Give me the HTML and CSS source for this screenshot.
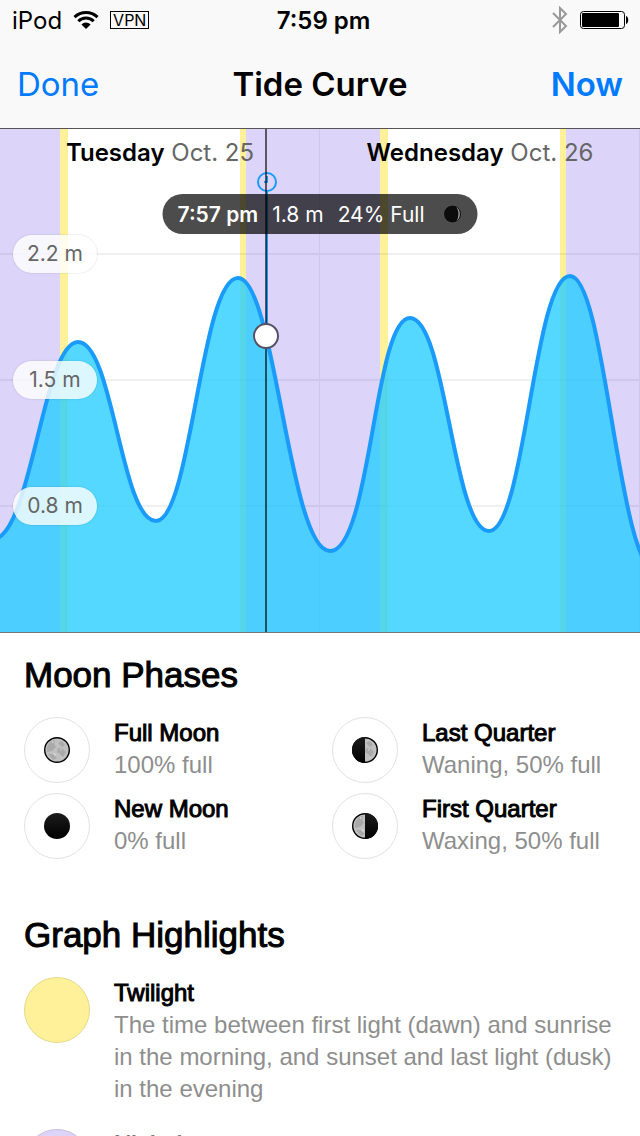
FILE: index.html
```html
<!DOCTYPE html>
<html lang="en">
<head>
    <meta charset="UTF-8">
    <meta name="viewport" content="width=device-width, initial-scale=1.0">
    <title>Tide Curve</title>
    <link rel="stylesheet" href="styles.css">
</head>
<body>
    <header class="header">
        <div class="status-bar">
            <div class="status-left">
                <span>iPod</span>
                <svg class="wifi" width="26" height="20" viewBox="0 0 26 20">
                    <path d="M1.5 7.2a16.5 16.5 0 0 1 23 0M5.3 11.2a11 11 0 0 1 15.4 0" fill="none" stroke="#000" stroke-width="3"/>
                    <path d="M13 19l-4.6-4.6a6.6 6.6 0 0 1 9.2 0z"/>
                </svg>
                <span class="vpn">VPN</span>
            </div>
            <div class="status-time">7:59 pm</div>
            <div class="status-right">
                <svg width="16" height="28" viewBox="0 0 16 28">
                    <path d="M1 7l13 13-6 6V2l6 6L1 21" fill="none" stroke="#999" stroke-width="2"/>
                </svg>
                <svg width="50" height="20" viewBox="0 0 50 20">
                    <rect x="1.5" y="1.5" width="44" height="17" rx="3" fill="none" stroke="#000"/>
                    <rect x="3" y="3" width="37" height="14" rx="1"/>
                    <path d="M47 6c3 1 3 7 0 8z"/>
                </svg>
            </div>
        </div>
        <nav class="nav-bar">
            <button class="nav-button" type="button">Done</button>
            <h1 class="nav-title">Tide Curve</h1>
            <button class="nav-button nav-now" type="button">Now</button>
        </nav>
    </header>

    <section class="chart">
        <svg class="chart-graph" viewBox="0 1 640 503" preserveAspectRatio="xMidYMid slice">
            <!-- night -->
            <path class="night" d="M0 0h60v504H0zM246 0h134v504H246zM566 0h74v504h-74z"/>
            <!-- twilight -->
            <path class="twilight" d="M60 0h8v504h-8zM240 0h6v504h-6zM380 0h8v504h-8zM560 0h6v504h-6z"/>
            <path class="grid" d="M0 125h640v2H0zM0 251h640v2H0zM0 377h640v2H0zM319 0h1v504h-1zM639 0h1v504h-1z"/>
            <path class="water" d="M-7 411C31 411 43 214 78 214S121 393 156 393S201 150 238 150S289 423 330 423S374 190 410 190S453 403 489 403S534 148 570 148S618 446 658 446V504H-7z"/>
            <path class="curve" d="M-7 411C31 411 43 214 78 214S121 393 156 393S201 150 238 150S289 423 330 423S374 190 410 190S453 403 489 403S534 148 570 148S618 446 658 446"/>
            <!-- current time -->
            <path class="now-mark" d="M267 63v144M264 54h3v-6"/>
            <circle class="now-mark" cx="267" cy="54" r="9"/>
            <path class="cursor" d="M265 0h2v196h-2zM265 220h2v284h-2z"/>
            <circle class="handle" cx="266" cy="208" r="12"/>
        </svg>
        <div class="days">
            <div class="day"><b>Tuesday</b> Oct. 25</div>
            <div class="day"><b>Wednesday</b> Oct. 26</div>
        </div>
        <div class="readout">
            <b>7:57 pm</b>
            <span>1.8 m</span>
            <span>24% Full</span>
            <svg class="readout-moon" width="20" height="20" viewBox="0 0 20 20">
                <circle cx="10" cy="10" r="9" fill="#0c0c0c" stroke="#555"/>
                <path d="M14 3a9 9 0 0 1 0 14q4-7 0-14z" fill="#aaa"/>
            </svg>
        </div>
        <div class="levels">
            <span class="level">2.2 m</span>
            <span class="level">1.5 m</span>
            <span class="level">0.8 m</span>
        </div>
    </section>

    <main class="legend">
        <svg class="defs" width="0" height="0">
            <defs>
                <linearGradient id="dark" x2="0" y2="1">
                    <stop offset="0" stop-color="#1c1c1c"/>
                    <stop offset="1" stop-color="#000"/>
                </linearGradient>
                <g id="moon">
                    <circle cx="14" cy="14" r="12.3" fill="#c0c0c0" stroke="#000" stroke-width="1.4"/>
                    <path d="M4 11q3-7 8-7l-1 4 2 3-4 4-5 1zM15 7l4-2 3 4-3 2zM15 12l5 1 3 3-3 5-3-3-3-2zM5 18l5 0 4 4-4 2z" fill="#a0a0a0" opacity=".7"/>
                    <path d="M9 5l2 1-2 1zM18 13l1 1-2 1zM10 17l3 1-1 2zM19 21l1 0-2 2z" fill="#ddd"/>
                </g>
            </defs>
        </svg>

        <h2 class="legend-title">Moon Phases</h2>
        <div class="phases">
            <div class="item">
                <div class="badge">
                    <svg width="28" height="28"><use href="#moon"/></svg>
                </div>
                <div>
                    <h3 class="item-name">Full Moon</h3>
                    <p class="item-text">100% full</p>
                </div>
            </div>
            <div class="item">
                <div class="badge">
                    <svg width="28" height="28"><use href="#moon"/><path d="M14 1a13 13 0 0 0 0 26z" fill="url(#dark)"/></svg>
                </div>
                <div>
                    <h3 class="item-name">Last Quarter</h3>
                    <p class="item-text">Waning, 50% full</p>
                </div>
            </div>
            <div class="item">
                <div class="badge">
                    <svg width="28" height="28"><circle cx="14" cy="14" r="13" fill="url(#dark)"/></svg>
                </div>
                <div>
                    <h3 class="item-name">New Moon</h3>
                    <p class="item-text">0% full</p>
                </div>
            </div>
            <div class="item">
                <div class="badge">
                    <svg width="28" height="28"><use href="#moon"/><path d="M14 1a13 13 0 0 1 0 26z" fill="url(#dark)"/></svg>
                </div>
                <div>
                    <h3 class="item-name">First Quarter</h3>
                    <p class="item-text">Waxing, 50% full</p>
                </div>
            </div>
        </div>

        <h2 class="legend-title">Graph Highlights</h2>
        <div class="highlights">
            <div class="item">
                <div class="badge badge-twilight"></div>
                <div>
                    <h3 class="item-name">Twilight</h3>
                    <p class="item-text">The time between first light (dawn) and sunrise in the morning, and sunset and last light (dusk) in the evening</p>
                </div>
            </div>
            <div class="item">
                <div class="badge badge-night"></div>
                <div>
                    <h3 class="item-name">Nighttime</h3>
                </div>
            </div>
        </div>
    </main>
</body>
</html>
```
FILE: styles.css
```css
* {
    box-sizing: border-box;
}
body {
    display: flex;
    flex-direction: column;
    height: 100vh;
    margin: 0;
    overflow: hidden;
    font-family: Inter, "Liberation Sans", sans-serif;
    color: #000;
    background: #fff;
}
h1, h2, h3, p {
    margin: 0;
}
svg {
    display: block;
}

/* Header */
.header {
    flex: none;
    height: 128px;
    background: #f9f9f9;
}
.status-bar, .nav-bar {
    display: grid;
    grid-template-columns: 1fr auto 1fr;
    align-items: center;
}
.status-bar {
    height: 40px;
    padding: 0 11px 0 12px;
    font-size: 24px;
}
.status-left, .status-right {
    display: flex;
    align-items: center;
    gap: 11px;
}
.status-right {
    justify-content: flex-end;
}
.status-time {
    padding-left: 6px;
    font-weight: 600;
}
.vpn {
    padding: 0 2px;
    border: 1px solid #000;
    font-size: 16px;
    line-height: 16px;
}
.nav-bar {
    height: 88px;
    padding: 0 17px;
}
.nav-button {
    justify-self: start;
    padding: 0;
    border: 0;
    background: none;
    color: #007aff;
    font-family: inherit;
    font-size: 33px;
    cursor: pointer;
}
.nav-now {
    justify-self: end;
    font-weight: 600;
}
.nav-title {
    font-size: 33px;
    font-weight: 600;
}

/* Tide chart */
.chart {
    position: relative;
    flex: none;
    border-top: 1px solid #555;
    border-bottom: 1px solid #777;
}
.chart-graph {
    width: 100%;
    height: 503px;
}
.night {
    fill: #dcd5f9;
}
.twilight {
    fill: #fff19a;
}
.grid {
    fill: rgba(0, 0, 0, .06);
}
.water {
    fill: rgba(33, 204, 255, .77);
}
.curve {
    fill: none;
    stroke: #1a9bfc;
    stroke-width: 4;
}
.now-mark {
    fill: none;
    stroke: #1a9bfc;
    stroke-width: 2;
}
.cursor {
    fill: rgba(0, 0, 0, .6);
}
.handle {
    fill: #fff;
    stroke: #555065;
    stroke-width: 2;
}
.days {
    position: absolute;
    top: 8px;
    left: 0;
    right: 0;
    display: grid;
    grid-template-columns: 1fr 1fr;
    font-size: 24px;
    line-height: 32px;
    text-align: center;
    color: #666;
}
.day b {
    font-weight: 600;
    color: #000;
}
.readout {
    position: absolute;
    top: 65px;
    left: 50%;
    display: flex;
    align-items: center;
    gap: 14px;
    height: 40px;
    padding: 0 15px;
    border-radius: 20px;
    background: rgba(0, 0, 0, .7);
    color: #fff;
    font-size: 21px;
    white-space: nowrap;
    transform: translateX(-50%);
}
.readout b {
    font-weight: 600;
}
.readout-moon {
    margin-left: 4px;
}
.levels {
    position: absolute;
    top: 106px;
    left: 13px;
    display: flex;
    flex-direction: column;
    gap: 88px;
}
.level {
    width: 84px;
    height: 38px;
    border-radius: 19px;
    background: rgba(255, 255, 255, .8);
    box-shadow: 0 0 2px rgba(0, 0, 0, .2);
    color: #666;
    font-size: 21px;
    line-height: 38px;
    text-align: center;
}

/* Legend */
.legend {
    flex: 1;
    min-height: 0;
    padding: 0 24px;
    overflow: hidden;
    font-family: "Liberation Sans", Arial, sans-serif;
}
.defs {
    position: absolute;
}
.legend-title {
    padding: 22px 0;
    font-size: 35px;
    font-weight: 400;
    line-height: 40px;
    -webkit-text-stroke: 1px #000;
}
.phases {
    display: grid;
    grid-template-columns: 1fr 1fr;
    gap: 10px 24px;
    padding-bottom: 34px;
}
.highlights {
    display: grid;
    gap: 24px;
}
.item {
    display: flex;
    align-items: flex-start;
    gap: 24px;
    font-size: 24px;
    line-height: 32px;
}
.badge {
    display: flex;
    flex: none;
    align-items: center;
    justify-content: center;
    width: 66px;
    height: 66px;
    border: 1px solid #e2e2e2;
    border-radius: 50%;
}
.badge-twilight {
    border-color: #e5d98b;
    background: #fff19a;
}
.badge-night {
    border-color: #c6c0e0;
    background: #dcd5f9;
}
.item-name {
    font-size: 24px;
    font-weight: 400;
    -webkit-text-stroke: 1px #000;
}
.item-text {
    color: #8e8e8e;
}
```
